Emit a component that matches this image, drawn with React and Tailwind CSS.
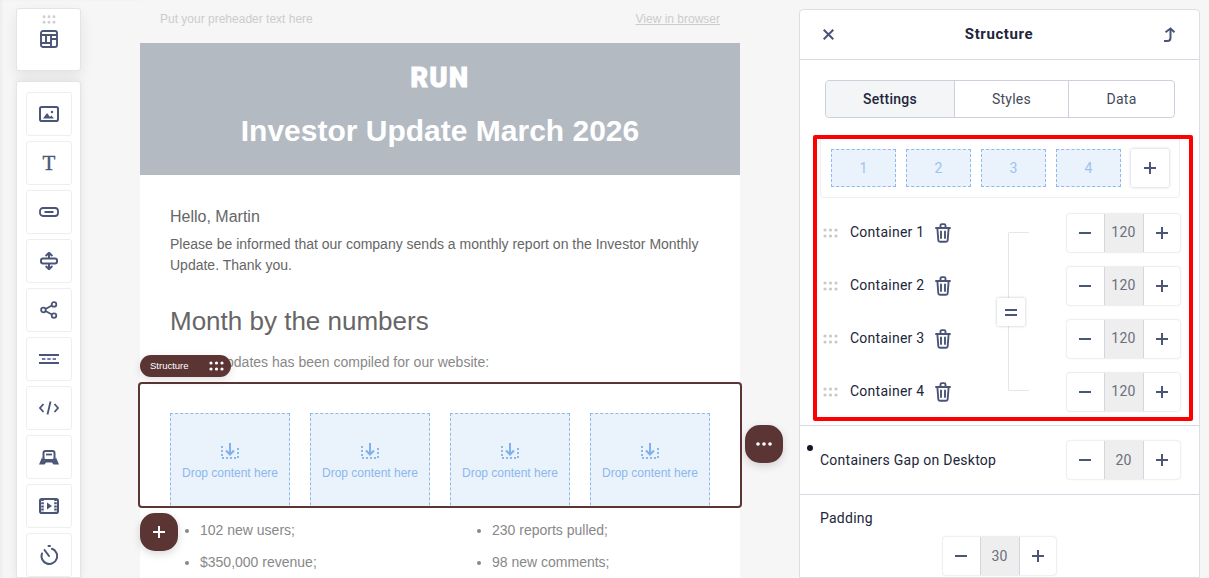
import React from "react";

const ink = "#4a5578";

function Dots({ color = "#c9c9c9", className = "" }) {
  return (
    <svg viewBox="0 0 15 10" className={className} fill={color}>
      {[2, 7.5, 13].map((x) =>
        [2, 8].map((y) => <circle key={`${x}-${y}`} cx={x} cy={y} r="1.6" />)
      )}
    </svg>
  );
}

function Plus({ className = "w-[12px] h-[12px]", color = ink }) {
  return (
    <svg viewBox="0 0 12 12" className={className} fill="none" stroke={color} strokeWidth="2">
      <path d="M6 0v12M0 6h12" />
    </svg>
  );
}

function Trash() {
  return (
    <svg viewBox="0 0 16 20" className="h-[20px] w-[16px]" fill="none" stroke={ink} strokeWidth="1.9" strokeLinecap="round" strokeLinejoin="round">
      <path d="M1 5h14M5.500 4.600V2.600c0-.9.6-1.500 1.400-1.500h2.200c.8 0 1.400.6 1.400 1.500v2M2.400 5.500 3.300 17c.1 1 .9 1.800 1.900 1.800h5.600c1 0 1.800-.8 1.900-1.800l.9-11.500M6 8.500v6.500M10 8.500v6.500" />
    </svg>
  );
}

function Stepper({ value }) {
  return (
    <div className="flex h-[38px] w-[113px] rounded-[3px] bg-white shadow-[0_0_2px_rgba(70,80,110,0.35)]">
      <button className="flex w-[36.5px] items-center justify-center">
        <svg viewBox="0 0 12 2" className="h-[2px] w-[12px]"><path d="M0 1h12" stroke={ink} strokeWidth="2" /></svg>
      </button>
      <div className="flex w-[40px] items-center justify-center border-x border-[#d3d6df] bg-[#eeeeee] text-[14px] tracking-[0.25px] text-[#6b6f7d]">{value}</div>
      <button className="flex w-[36.5px] items-center justify-center"><Plus /></button>
    </div>
  );
}

const ImageIcon = () => (
  <svg viewBox="0 0 20 16" className="h-[16px] w-[20px]" fill="none">
    <rect x="1" y="1" width="18" height="14" rx="1.800" stroke={ink} strokeWidth="2" />
    <path d="M4 12.500 8 7l3 4 1.400-1.400 2.600 2.900z" fill={ink} />
    <circle cx="13" cy="6" r="1.200" fill={ink} />
  </svg>
);
const ButtonIcon = () => (
  <svg viewBox="0 0 20 10" className="h-[10px] w-[20px]" fill="none" stroke={ink} strokeWidth="1.800">
    <rect x="1" y="1" width="18" height="8" rx="3" />
    <path d="M5.500 5h9" strokeWidth="2" />
  </svg>
);
const SpacerIcon = () => (
  <svg viewBox="0 0 18 18" className="h-[18px] w-[18px]" fill="none" stroke={ink} strokeWidth="2" strokeLinejoin="round">
    <rect x="1" y="6.500" width="16" height="5" rx="2" />
    <path d="M9 6V1.600M9 12v4.600" />
    <path d="m6.200 3.400 2.800-2.600 2.800 2.600M6.200 14.600l2.800 2.600 2.800-2.600" strokeLinecap="round" />
  </svg>
);
const ShareIcon = () => (
  <svg viewBox="0 0 18 18" className="h-[18px] w-[18px]" fill="none" stroke={ink} strokeWidth="1.800">
    <circle cx="14" cy="3.400" r="2.300" />
    <circle cx="3.400" cy="9" r="2.300" />
    <circle cx="14" cy="14.600" r="2.300" />
    <path d="m5.500 8 6.400-3.500M5.500 10l6.400 3.500" />
  </svg>
);
const DividerIcon = () => (
  <svg viewBox="0 0 20 10" className="h-[10px] w-[20px]" fill="none" stroke={ink} strokeWidth="1.800">
    <path d="M0 1h20M0 9h20" />
    <path d="M3 5h14" strokeDasharray="3.400 1.900" strokeWidth="1.500" />
  </svg>
);
const CodeIcon = () => (
  <svg viewBox="0 0 20 14" className="h-[14px] w-[20px]" fill="none" stroke={ink} strokeWidth="1.800">
    <path d="M4.500 3 1 7l3.500 4M15.500 3 19 7l-3.500 4M11.500 .5 8.500 13.500" />
  </svg>
);
const MenuIcon = () => (
  <svg viewBox="0 0 20 15" className="h-[15px] w-[20px]" fill="none">
    <rect x="4.500" y="1" width="11" height="9" rx="2" stroke={ink} strokeWidth="2" />
    <path d="M7 4.500h6" stroke={ink} strokeWidth="1.800" />
    <path d="M3 7.500 5 10.500h10l2-3 3 7h-5.500L13 12.500H7l-1.500 2H0z" fill={ink} />
  </svg>
);
const VideoIcon = () => (
  <svg viewBox="0 0 20 16" className="h-[16px] w-[20px]" fill="none">
    <rect x="1" y="1" width="18" height="14" rx="1.800" stroke={ink} strokeWidth="2" />
    <path d="M3.500 1v14M16.500 1v14" stroke={ink} strokeWidth="2.600" strokeDasharray="2 1.200" />
    <path d="M8 4.500v7l5-3.500z" fill={ink} />
  </svg>
);
const TimerIcon = () => (
  <svg viewBox="0 0 18 20" className="h-[20px] w-[18px]" fill="none" stroke={ink} strokeWidth="2" strokeLinecap="round">
    <path d="M12 3.800A7.800 7.800 0 1 1 2 8.500" />
    <path d="M4.500 5 9 11" />
    <path d="M8.500 1h1.500" />
  </svg>
);

const tools = [
  <ImageIcon />,
  <span className="font-['Liberation_Serif'] text-[21px] leading-none text-[#4a5578] [-webkit-text-stroke:0.4px_#4a5578]">T</span>,
  <ButtonIcon />,
  <SpacerIcon />,
  <ShareIcon />,
  <DividerIcon />,
  <CodeIcon />,
  <MenuIcon />,
  <VideoIcon />,
  <TimerIcon />,
];

function DropBox() {
  return (
    <div className="flex h-[122px] w-[120px] shrink-0 flex-col items-center border border-dashed border-[#8db9ec] bg-[#eaf2fc] pt-[29px]">
      <svg viewBox="0 0 18 16" className="h-[16px] w-[18px]" fill="none" stroke="#8ab8ee">
        <path d="M1 3v12h16V3" strokeWidth="2" strokeDasharray="2 2" />
        <path d="M9 0v11M5 7.500 9 11.500 13 7.500" strokeWidth="2" stroke="#7fb0ea" />
      </svg>
      <div className="mt-[6px] text-[12px] leading-[16px] text-[#8ab8ee]">Drop content here</div>
    </div>
  );
}

function ContainerRow({ n }) {
  return (
    <div className="flex h-[53px] items-center">
      <Dots className="ml-[3px] h-[10px] w-[15px]" />
      <span className="ml-[12px] w-[85px] text-[14px] tracking-[0.25px] text-[#21263a]">Container {n}</span>
      <Trash />
      <div className="ml-auto"><Stepper value="120" /></div>
    </div>
  );
}

export default function App() {
  return (
    <div className="relative flex h-[578px] w-[1209px] overflow-hidden bg-[#f6f6f6] font-['Liberation_Sans',sans-serif]">
      {/* tool rail */}
      <aside className="flex w-[140px] shrink-0 flex-col gap-[10px] pl-[16px] pt-[8px] shadow-[inset_2px_0_3px_rgba(0,0,0,0.04)]">
        <div className="flex h-[63px] w-[65px] flex-col items-center rounded-[3px] border border-[#e4e4e4] bg-white pt-[6px] shadow-[0_6px_14px_rgba(0,0,0,0.08)]">
          <Dots className="h-[9px] w-[14px]" color="#cfcfcf" />
          <svg viewBox="0 0 18 18" className="mt-[6px] h-[18px] w-[18px]" fill="none" stroke={ink} strokeWidth="1.900">
            <rect x="1" y="1" width="16" height="16" rx="2" />
            <path d="M1 5h16M6 5v8M1 13h10M11 5v12M11 9h6" />
          </svg>
        </div>
        <div className="flex w-[65px] flex-1 flex-col gap-[5px] rounded-t-[3px] border border-[#e4e4e4] bg-white px-[9px] pt-[10px] shadow-[0_0_8px_rgba(0,0,0,0.08)]">
          {tools.map((icon, i) => (
            <div key={i} className="flex h-[44px] w-[46px] shrink-0 items-center justify-center rounded-[3px] border border-[#eeeeee] bg-white">{icon}</div>
          ))}
        </div>
      </aside>

      {/* email */}
      <main className="w-[600px] shrink-0">
        <div className="flex h-[43px] items-center justify-between px-[20px] pb-[6px] text-[12px] text-[#cccccc]">
          <span>Put your preheader text here</span>
          <span className="underline">View in browser</span>
        </div>
        <div className="flex h-[132px] flex-col items-center bg-[#b4bac2] pt-[20px] text-white">
          <div className="font-['Roboto'] text-[27px] font-black leading-[30px] tracking-[1.5px] [-webkit-text-stroke:1px_#ffffff]">RUN</div>
          <div className="mt-[20px] text-[30px] font-bold leading-[36px]">Investor Update March 2026</div>
        </div>
        <div className="relative h-[403px] bg-white text-[#666666]">
          <div className="px-[30px] pt-[31px]">
            <p className="text-[16px] leading-[21px]">Hello, Martin</p>
            <p className="mt-[7px] text-[14px] leading-[21px]">Please be informed that our company sends a monthly report on the Investor Monthly Update. Thank you.</p>
            <h2 className="mt-[29px] text-[26px] leading-[32px]">Month by the numbers</h2>
            <p className="mt-[15px] text-[14px] leading-[21px] text-[#888888]">Recent updates has been compiled for our website:</p>
          </div>

          <div className="relative mx-[-2px] mt-[9px] h-[126px] rounded-[4px] border-2 border-[#5a3533]">
            <div className="h-full overflow-hidden rounded-[2px] px-[30px] pt-[29px]">
              <div className="flex gap-[20px]"><DropBox /><DropBox /><DropBox /><DropBox /></div>
            </div>
            <div className="absolute left-[0px] top-[-29px] flex h-[22px] w-[91px] items-center justify-between rounded-[11px] bg-[#5a3533] pl-[10px] pr-[7px] text-[9.5px] text-white shadow-[0_3px_8px_rgba(0,0,0,0.12)]">
              <span>Structure</span>
              <Dots color="#ffffff" className="h-[10px] w-[15px]" />
            </div>
            <button className="absolute left-[605px] top-[41px] flex h-[38px] w-[38px] items-center justify-center rounded-[15px] bg-[#5a3533] shadow-[0_3px_8px_rgba(0,0,0,0.15)]">
              <svg viewBox="0 0 16 4" className="h-[4px] w-[16px]" fill="#ffffff"><circle cx="2" cy="2" r="1.800" /><circle cx="8" cy="2" r="1.800" /><circle cx="14" cy="2" r="1.800" /></svg>
            </button>
            <button className="absolute left-[0px] top-[129px] z-10 flex h-[38px] w-[38px] items-center justify-center rounded-[15px] bg-[#5a3533] shadow-[0_3px_8px_rgba(0,0,0,0.15)]">
              <Plus color="#ffffff" className="h-[12px] w-[12px]" />
            </button>
          </div>

          <div className="grid grid-cols-2 pl-[30px] pt-[6px] text-[14px] leading-[32px] text-[#888888]">
            <ul className="w-[292px] list-disc pl-[30px]"><li>102 new users;</li><li>$350,000 revenue;</li></ul>
            <ul className="ml-[7px] list-disc pl-[30px]"><li>230 reports pulled;</li><li>98 new comments;</li></ul>
          </div>
        </div>
      </main>

      <div className="w-[59px] shrink-0" />

      {/* settings panel */}
      <section className="relative mt-[9px] h-[569px] w-[401px] shrink-0 rounded-t-[4px] border border-[#dcdee5] bg-white font-['Roboto',sans-serif] text-[#21263a]">
        <header className="flex h-[50px] items-center justify-between border-b border-[#d6d9e2] px-[23px]">
          <svg viewBox="0 0 11 11" className="h-[11px] w-[11px]" fill="none" stroke={ink} strokeWidth="2"><path d="m.7.7 9.600 9.600M10.300.7.7 10.300" /></svg>
          <h1 className="ml-[1px] text-[15px] font-bold tracking-[0.6px]">Structure</h1>
          <svg viewBox="0 0 13 15" className="h-[15px] w-[13px]" fill="none" stroke={ink} strokeWidth="2"><path d="M2.500 5.200 7.500 1.500l4 3.700M7.500 2v8.500c0 2.400-1 3.500-3 3.500H1" /></svg>
        </header>

        <div className="ml-[25px] mr-[24px] mt-[20px] flex h-[38px] rounded-[4px] border border-[#ccd0dc] text-[14px] tracking-[0.25px]">
          <div className="flex w-[129px] items-center justify-center rounded-l-[4px] border-r border-[#ccd0dc] bg-[#f4f5f7] font-medium">Settings</div>
          <div className="flex w-[114px] items-center justify-center border-r border-[#ccd0dc] text-[#454a58]">Styles</div>
          <div className="flex flex-1 items-center justify-center text-[#454a58]">Data</div>
        </div>

        <div className="h-[307px] pl-[20px] pr-[19px] pt-[18px]">
          <div className="flex h-[62px] items-start gap-[10px] rounded-b-[4px] border border-[#eeeeee] px-[10px] pt-[12px]">
            {[1, 2, 3, 4].map((n) => (
              <div key={n} className="flex h-[38px] w-[65px] items-center justify-center border border-dashed border-[#8db9ec] bg-[#eaf2fc] text-[14px] text-[#9cc2f0]">{n}</div>
            ))}
            <button className="flex h-[38px] w-[38px] items-center justify-center rounded-[2px] bg-white shadow-[0_0_3px_rgba(70,80,110,0.35)]"><Plus /></button>
          </div>
          <div className="relative mt-[8px]">
            <ContainerRow n={1} />
            <ContainerRow n={2} />
            <ContainerRow n={3} />
            <ContainerRow n={4} />
            <div className="absolute left-[188px] top-[26px] h-[159px] w-[21px] rounded-l-[2px] border-y border-l border-[#e6e6e6]" />
            <button className="absolute left-[177px] top-[92px] flex h-[28px] w-[28px] items-center justify-center rounded-[2px] bg-white shadow-[0_0_3px_rgba(70,80,110,0.35)]">
              <svg viewBox="0 0 12 7" className="h-[7px] w-[12px]" fill="none" stroke={ink} strokeWidth="2"><path d="M0 1h12M0 6h12" /></svg>
            </button>
          </div>
        </div>

        <div className="relative flex h-[70px] items-center justify-between border-y border-[#d6d9e2] pl-[20px] pr-[19px]">
          <span className="absolute left-[7px] top-[19px] h-[6px] w-[6px] rounded-full bg-[#13172a]" />
          <span className="text-[14px] tracking-[0.25px]">Containers Gap on Desktop</span>
          <Stepper value="20" />
        </div>

        <div className="px-[20px] pt-[13px]">
          <div className="text-[14px] leading-[20px] tracking-[0.25px]">Padding</div>
          <div className="mt-[9px] flex justify-center"><Stepper value="30" /></div>
        </div>

        <div className="pointer-events-none absolute left-[13px] top-[125px] h-[286px] w-[380px] rounded-[2px] border-[4px] border-[#ff0000]" />
      </section>
    </div>
  );
}
